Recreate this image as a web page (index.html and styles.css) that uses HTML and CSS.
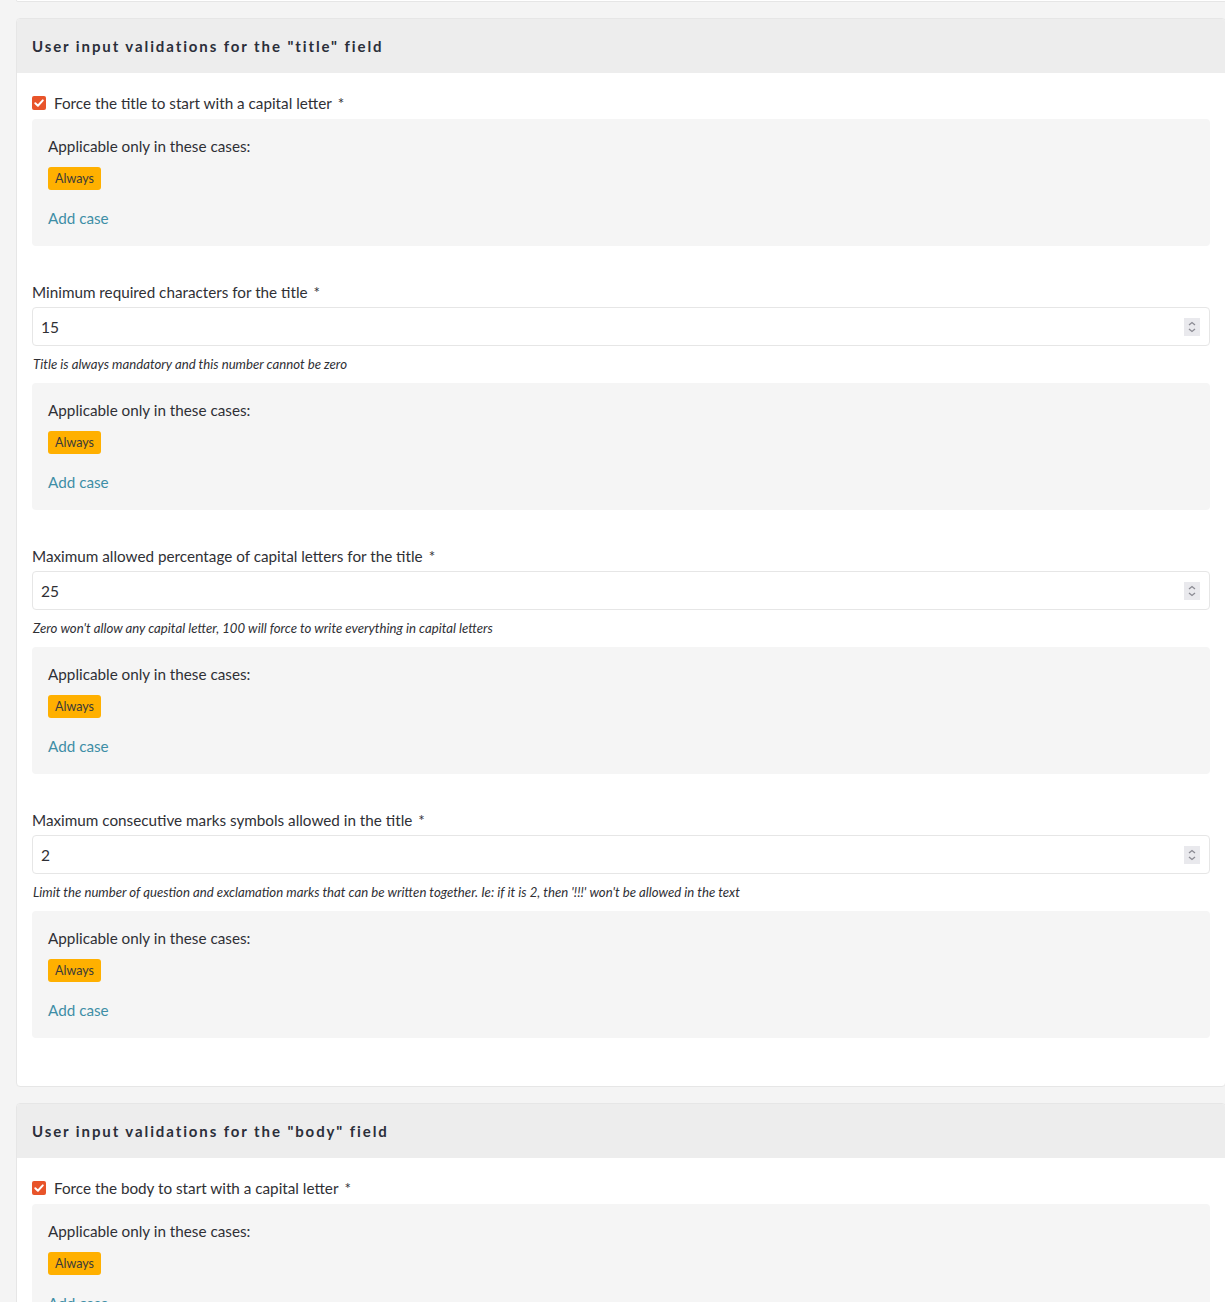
FILE: index.html
```html
<!DOCTYPE html>
<html>
<head>
<meta charset="utf-8">
<link rel="stylesheet" href="styles.css">
</head>
<body>
<div class="page">
  <div class="card-stub"></div>

  <section class="card">
    <header class="card-head">User input validations for the "title" field</header>
    <div class="card-body">
      <div class="field">
        <label class="check-row"><span class="check"><svg viewBox="0 0 14 14" width="14" height="14"><path d="M3.3 7.2 L5.9 9.7 L10.8 4.4" fill="none" stroke="#fff" stroke-width="2" stroke-linecap="round" stroke-linejoin="round"/></svg></span><span>Force the title to start with a capital letter</span><span class="req">*</span></label>
        <div class="cases">
          <div class="cases-title">Applicable only in these cases:</div>
          <div class="badges"><span class="badge">Always</span></div>
          <a class="add-case">Add case</a>
        </div>
      </div>

      <div class="field">
        <div class="label">Minimum required characters for the title<span class="req">*</span></div>
        <div class="num-input"><span class="num-value">15</span><span class="spinner"><svg viewBox="0 0 16 18" width="16" height="18"><path d="M5 7 L8 4.5 L11 7 M5 11 L8 13.5 L11 11" fill="none" stroke="#8b8b93" stroke-width="1.3"/></svg></span></div>
        <div class="help">Title is always mandatory and this number cannot be zero</div>
        <div class="cases">
          <div class="cases-title">Applicable only in these cases:</div>
          <div class="badges"><span class="badge">Always</span></div>
          <a class="add-case">Add case</a>
        </div>
      </div>

      <div class="field">
        <div class="label">Maximum allowed percentage of capital letters for the title<span class="req">*</span></div>
        <div class="num-input"><span class="num-value">25</span><span class="spinner"><svg viewBox="0 0 16 18" width="16" height="18"><path d="M5 7 L8 4.5 L11 7 M5 11 L8 13.5 L11 11" fill="none" stroke="#8b8b93" stroke-width="1.3"/></svg></span></div>
        <div class="help">Zero won't allow any capital letter, 100 will force to write everything in capital letters</div>
        <div class="cases">
          <div class="cases-title">Applicable only in these cases:</div>
          <div class="badges"><span class="badge">Always</span></div>
          <a class="add-case">Add case</a>
        </div>
      </div>

      <div class="field">
        <div class="label">Maximum consecutive marks symbols allowed in the title<span class="req">*</span></div>
        <div class="num-input"><span class="num-value">2</span><span class="spinner"><svg viewBox="0 0 16 18" width="16" height="18"><path d="M5 7 L8 4.5 L11 7 M5 11 L8 13.5 L11 11" fill="none" stroke="#8b8b93" stroke-width="1.3"/></svg></span></div>
        <div class="help">Limit the number of question and exclamation marks that can be written together. Ie: if it is 2, then '!!!' won't be allowed in the text</div>
        <div class="cases">
          <div class="cases-title">Applicable only in these cases:</div>
          <div class="badges"><span class="badge">Always</span></div>
          <a class="add-case">Add case</a>
        </div>
      </div>
    </div>
  </section>

  <section class="card">
    <header class="card-head">User input validations for the "body" field</header>
    <div class="card-body">
      <div class="field">
        <label class="check-row"><span class="check"><svg viewBox="0 0 14 14" width="14" height="14"><path d="M3.3 7.2 L5.9 9.7 L10.8 4.4" fill="none" stroke="#fff" stroke-width="2" stroke-linecap="round" stroke-linejoin="round"/></svg></span><span>Force the body to start with a capital letter</span><span class="req">*</span></label>
        <div class="cases">
          <div class="cases-title">Applicable only in these cases:</div>
          <div class="badges"><span class="badge">Always</span></div>
          <a class="add-case">Add case</a>
        </div>
      </div>
    </div>
  </section>
</div>
</body>
</html>
```

FILE: styles.css
```css
html, body {
  margin: 0;
  padding: 0;
  overflow: hidden;
}
body {
  background: #f4f4f4;
  font-family: "Lato", "Liberation Sans", sans-serif;
  font-size: 15.25px;
  color: #2f3035;
}
.page {
  padding-left: 16px;
  margin-right: -1px;
}
.card-stub {
  height: 1px;
  background: #fff;
  border: 1px solid #e6e6e6;
  border-top: none;
  border-radius: 0 0 4px 4px;
}
.card {
  margin-top: 16px;
  background: #fff;
  border: 1px solid #e6e6e6;
  border-radius: 4px;
  overflow: hidden;
}
.card-head {
  background: #ededed;
  height: 54px;
  display: flex;
  align-items: center;
  padding-left: 15px;
  font-weight: 700;
  font-size: 15px;
  letter-spacing: 1.9px;
  color: #2b2f3a;
}
.card-body {
  padding: 18px 15px 14px 15px;
}
.field {
  margin-bottom: 34px;
}
.check-row {
  display: flex;
  align-items: center;
  height: 24px;
  line-height: 24px;
  margin-bottom: 4px;
}
.check {
  width: 14px;
  height: 14px;
  background: #e8542a;
  border-radius: 2px;
  margin-right: 8px;
  display: inline-flex;
}
.req {
  margin-left: 6px;
}
.label {
  height: 24px;
  line-height: 24px;
  margin-bottom: 3px;
}
.num-input {
  height: 37px;
  border: 1px solid #e6e6e6;
  border-radius: 4px;
  display: flex;
  align-items: center;
  padding: 0 9px 0 8px;
  font-size: 15.5px;
}
.num-value {
  flex: 1;
}
.spinner {
  width: 16px;
  height: 18px;
  background: #e9e9ed;
  display: inline-flex;
}
.help {
  font-style: italic;
  font-size: 13.2px;
  height: 16px;
  line-height: 16px;
  margin: 10px 0 11px 1px;
}
.cases {
  background: #f5f5f5;
  border-radius: 4px;
  padding: 15px 16px 16px;
}
.cases-title {
  height: 24px;
  line-height: 24px;
}
.badges {
  margin-top: 9px;
  height: 23px;
  display: flex;
}
.badge {
  background: #ffb000;
  color: #3a3a3a;
  font-size: 12.5px;
  height: 23px;
  line-height: 23px;
  padding: 0 7px;
  border-radius: 3px;
}
.add-case {
  display: block;
  margin-top: 16px;
  height: 24px;
  line-height: 24px;
  color: #3e8ea6;
}
```
